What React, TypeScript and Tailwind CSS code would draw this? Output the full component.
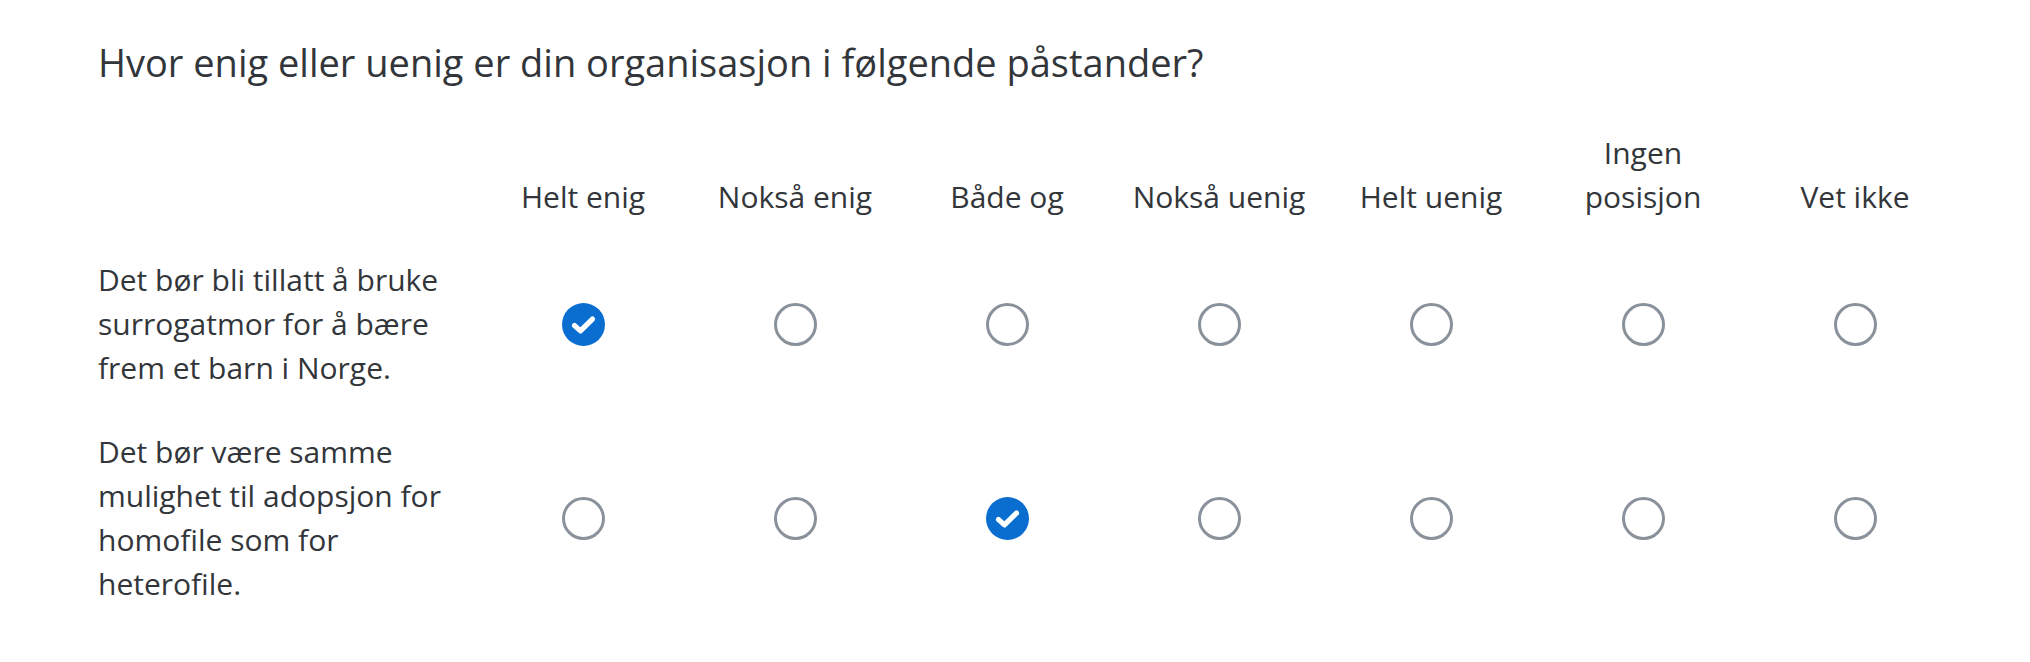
const choices = [
  ["Helt enig"],
  ["Nokså enig"],
  ["Både og"],
  ["Nokså uenig"],
  ["Helt uenig"],
  ["Ingen", "posisjon"],
  ["Vet ikke"],
];

const statements = [
  { text: "Det bør bli tillatt å bruke surrogatmor for å bære frem et barn i Norge.", picked: 0 },
  { text: "Det bør være samme mulighet til adopsjon for homofile som for heterofile.", picked: 2 },
];

function Radio({ checked }: { checked: boolean }) {
  if (checked) {
    return (
      <span className="flex h-[43px] w-[43px] items-center justify-center rounded-full bg-[#0a6ed1]">
        <svg viewBox="0 0 24 24" className="h-[43px] w-[43px]" fill="none">
          <path
            d="M7 12.6l3.3 3L17 9"
            stroke="white"
            strokeWidth="2.9"
            strokeLinecap="round"
            strokeLinejoin="round"
          />
        </svg>
      </span>
    );
  }
  return <span className="block h-[43px] w-[43px] rounded-full border-[3.5px] border-[#89919a] bg-white" />;
}

export default function App() {
  return (
    <div className="min-h-[662px] bg-white pl-[98px] pt-[39px] font-['Open_Sans',sans-serif] text-[#32363a]">
      <h1 className="text-[38px] leading-[46px] font-normal">
        Hvor enig eller uenig er din organisasjon i følgende påstander?
      </h1>

      <div className="mt-[46px] grid grid-cols-[379px_repeat(7,212px)] items-end text-[30px] leading-[44px]">
        <div />
        {choices.map((lines) => (
          <div key={lines.join(" ")} className="text-center">
            {lines.map((l) => (
              <div key={l}>{l}</div>
            ))}
          </div>
        ))}
      </div>

      {statements.map((s, i) => (
        <div
          key={i}
          className={`grid grid-cols-[379px_repeat(7,212px)] items-center text-[30px] leading-[44px] ${
            i === 0 ? "mt-[39px]" : "mt-[40px]"
          }`}
        >
          <div className="pr-[20px]">{s.text}</div>
          {choices.map((c, j) => (
            <div key={j} className="flex justify-center">
              <Radio checked={j === s.picked} />
            </div>
          ))}
        </div>
      ))}
    </div>
  );
}
